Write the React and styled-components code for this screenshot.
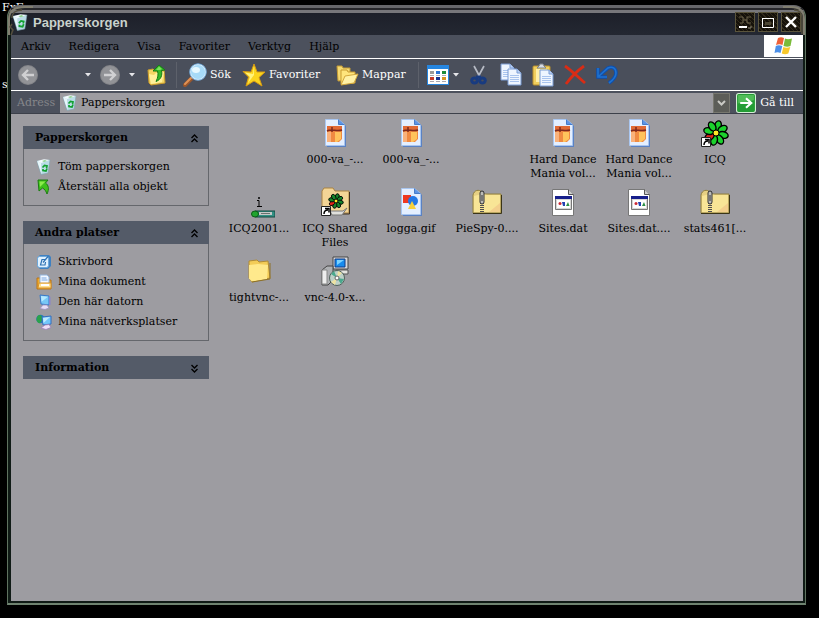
import React from "react";
import styled, {createGlobalStyle} from "styled-components";

const GlobalStyle = createGlobalStyle`
  * {
    box-sizing: border-box;
  }

  body {
    margin: 0;
    background-color: #000;
    font-family: "DejaVu Serif", serif;
    font-size: 11px;
    line-height: 14px;
    color: #000;
  }

  button, input {
    font: inherit;
    color: inherit;
    margin: 0;
    padding: 0;
    border: 0;
    background: none;
  }

  svg {
    display: block;
    flex: none;
  }
`

const Desktop = styled.div`
  position: relative;
  min-height: 100vh;
  display: flex;
  padding: 5px 13px 13px 7px;
`

const DesktopLabel = styled.span`
  position: absolute;
  left: 2px;
  top: ${({$top}) => $top}px;
  color: #fff;
`

const Window = styled.div`
  position: relative;
  flex: 1;
  min-width: 0;
  display: flex;
  flex-direction: column;
  border: 1px solid #5f7360;
  border-top: 3px solid #66666a;
  border-bottom: 2px solid #6f8370;
  border-radius: 12px 12px 0 0;
  padding: 0 2px 2px 3px;
  background-color: #101b16;
`

const Corner = styled.svg`
  position: absolute;
  top: -4px;
  ${({$right}) => ($right ? 'right: -2px;' : 'left: -1px;')}
  pointer-events: none;
`

const TitleBar = styled.header`
  display: flex;
  align-items: center;
  height: 27px;
  padding: 0 2px 0 1px;
  border-top: 1px solid #26262a;
  background: linear-gradient(#26262a 0, #26262a 1px, #77777b 1px, #77777b 4px, #1d202a 4px, #242832 100%);
`

const Title = styled.h1`
  flex: 1;
  margin: 0 0 0 4px;
  padding-top: 2px;
  font-family: "Liberation Sans", sans-serif;
  font-size: 13px;
  font-weight: bold;
  color: #c9d2cc;
`

const Controls = styled.div`
  display: flex;
  gap: 3px;
`

const ControlButton = styled.button`
  width: 20px;
  height: 20px;
  border: 1px solid #5a543c;
  background: repeating-linear-gradient(45deg, #15110a 0, #15110a 2px, #30291a 2px, #30291a 3px);
`

const MenuBar = styled.nav`
  display: flex;
  align-items: center;
  gap: 18px;
  height: 24px;
  padding-left: 10px;
  background-color: #4c515d;
  border-bottom: 1px solid #fff;
`

const Flag = styled.div`
  display: flex;
  align-items: center;
  justify-content: center;
  align-self: stretch;
  width: 39px;
  margin-left: auto;
  background-color: #fff;
  border-bottom: 1px solid #4c515d;
`

const ToolBar = styled.div`
  display: flex;
  align-items: center;
  gap: 6px;
  height: 32px;
  padding-left: 7px;
  background-color: #4a4f5b;
  border-bottom: 1px solid #fff;
`

const ToolButton = styled.button`
  display: flex;
  flex: none;
  align-items: center;
  justify-content: ${({$left}) => ($left ? 'flex-start' : 'center')};
  gap: 3px;
  width: ${({$width}) => $width || 26}px;
  height: 26px;
  color: #fff;
  white-space: nowrap;
`

const ToolGroup = styled.div`
  display: flex;
`

const Divider = styled.span`
  width: 1px;
  height: 26px;
  background-color: #5d616b;
`

const AddressBar = styled.form`
  display: flex;
  align-items: center;
  height: 23px;
  padding: 2px 9px 0 6px;
  background-color: #4c515d;
  border-bottom: 1px solid #3c404a;
`

const AddressLabel = styled.label`
  width: 43px;
  color: #85868a;
`

const AddressField = styled.div`
  display: flex;
  align-items: center;
  flex: 1;
  gap: 3px;
  height: 20px;
  padding-left: 2px;
  background-color: #9d9ca1;
`

const AddressInput = styled.input`
  flex: 1;
  min-width: 0;
  outline: none;
`

const DropButton = styled.button`
  display: flex;
  align-items: center;
  justify-content: center;
  width: 17px;
  height: 20px;
  border: 1px solid #77776f;
  background-color: #5c5d58;
`

const GoButton = styled.button`
  display: flex;
  align-items: center;
  gap: 4px;
  margin-left: 6px;
  color: #fff;
  white-space: nowrap;
`

const Content = styled.main`
  display: flex;
  flex: 1;
  background-color: #9d9ca1;
`

const Sidebar = styled.aside`
  display: flex;
  flex: none;
  flex-direction: column;
  gap: 15px;
  width: 210px;
  padding: 12px;
`

const PanelHeader = styled.button`
  display: flex;
  align-items: center;
  justify-content: space-between;
  width: 100%;
  height: 23px;
  padding: 1px 10px 0 12px;
  background-color: #545b68;
  font-weight: bold;
`

const PanelBody = styled.ul`
  list-style: none;
  margin: 0;
  padding: 8px 12px;
  border: 1px solid #65676c;
  border-top: 0;
`

const PanelLink = styled.a`
  display: flex;
  align-items: center;
  gap: 6px;
  height: 20px;
  color: #000;
  text-decoration: none;
  white-space: nowrap;
`

const Files = styled.ul`
  flex: 1;
  display: grid;
  grid-template-columns: repeat(auto-fill, 76px);
  grid-auto-rows: 63px;
  row-gap: 6px;
  align-content: start;
  list-style: none;
  margin: 0;
  padding: 4px 0 0;
`

const FileButton = styled.button`
  display: flex;
  flex-direction: column;
  align-items: center;
  gap: 3px;
  width: 100%;
  white-space: pre;
`

const BinIcon = ({size = 16}) => (
    <svg width={size} height={size} viewBox="0 0 16 16">
        <path d="M1 2l13-1-2 13-7 1.500z" fill="#b9dce6" stroke="#7fa3b0" strokeWidth=".6"/>
        <path d="M1 2l4 2 9-3-6-.8z" fill="#f4fbff"/>
        <path d="M1 2l4 2 .5 11z" fill="#e7f6fa"/>
        <path d="M6.500 8.500l2-2 2.500.5-.5 2M11 9.500l-1 2.500-3-.5V10" fill="none" stroke="#12a030" strokeWidth="1.700"/>
        <path d="M6 2l3-1 2 1-3 1z" fill="#8cd28e"/>
    </svg>
)

const RestoreIcon = () => (
    <svg width="16" height="16" viewBox="0 0 16 16">
        <path d="M2 1h10l-2.500 3c3 2 4 6 1.500 11-1-3-2.500-5-4.500-6L3 12z" fill="#3fc01b" stroke="#1c7b12"/>
        <path d="M3.500 2.500h6L4 8z" fill="#8cec4a"/>
    </svg>
)

const DesktopIcon = () => (
    <svg width="16" height="16" viewBox="0 0 16 16">
        <path d="M4 1h9l2 2v9l-3 3H4l-3-3V4z" fill="#3f80c0"/>
        <rect x="1.500" y="2.500" width="11" height="11" rx="2" fill="#dff1ff" stroke="#6ea8da"/>
        <path d="M9.500 5.500H6L4.500 11h4.500l.5-3M7 8.500l5-6" fill="none" stroke="#2e72b4" strokeWidth="1.200"/>
    </svg>
)

const DocumentsIcon = () => (
    <svg width="16" height="16" viewBox="0 0 16 16">
        <path d="M1 4h4l1 2h9v9H1z" fill="#eda92d" stroke="#b87518"/>
        <path d="M4 1h7l2 2v7H4z" fill="#f2f8ff" stroke="#92b4dc"/>
        <path d="M5.500 4h5M5.500 6h6" stroke="#7ba6de"/>
        <path d="M3 9h12v5H2z" fill="#ffe292" stroke="#d9942a"/>
        <path d="M5 11h8" stroke="#fff" strokeWidth="2"/>
    </svg>
)

const ComputerIcon = () => (
    <svg width="16" height="16" viewBox="0 0 16 16">
        <path d="M4 1l9 1v9l-8-1z" fill="#77c7f6" stroke="#3879c8"/>
        <path d="M5 2l7 .8-6.500 5z" fill="#b6e9ff"/>
        <path d="M7 11h4l2 3-4 1.500-5-1z" fill="#e6def6" stroke="#9b8fc0" strokeWidth=".8"/>
        <path d="M13 2l1.500 1v8L13 11z" fill="#8a84cc"/>
    </svg>
)

const NetworkIcon = () => (
    <svg width="16" height="16" viewBox="0 0 16 16">
        <circle cx="4.500" cy="5" r="4.300" fill="#237ab8"/>
        <path d="M1 3c2-3 4-2 5 0s-1 5-2 6-3-1-3.500-3z" fill="#2ba24b"/>
        <path d="M6 3l9-1v8l-8 1z" fill="#72c6fa" stroke="#356dbe"/>
        <path d="M7 4l7-1-6.500 6z" fill="#c0ebff"/>
        <path d="M9 11l4-.5 2 3-5 2-5-1.500z" fill="#eddff6" stroke="#9d7fb9" strokeWidth=".8"/>
    </svg>
)

const RoundArrow = ({flip}) => (
    <svg width="20" height="20" viewBox="0 0 20 20">
        <circle cx="10" cy="10" r="10" fill="#85868a"/>
        <circle cx="10" cy="10" r="9" fill="#929397"/>
        <path d={flip ? "M4 10h11M10 5l5 5-5 5" : "M16 10H5M10 5l-5 5 5 5"} fill="none" stroke="#d0d0d2" strokeWidth="2.400"/>
    </svg>
)

const SmallArrow = () => (
    <svg width="6" height="4" viewBox="0 0 6 4">
        <path d="M0 0h6L3 3.500z" fill="#e6e6ea"/>
    </svg>
)

const UpIcon = () => (
    <svg width="20" height="22" viewBox="0 0 20 22">
        <path d="M1 6l5-1 2 2 9-1 1 13-14 2-2-2z" fill="#f4d563" stroke="#c99b2c"/>
        <path d="M2 10l5 1 2-2 8-1-2 10-11 2z" fill="#fff09a"/>
        <path d="M6 7l6-6 6 5-3.500.5c1 5-.5 9-5.500 11 2-4 2.500-7 1.500-10.500z" fill="#36b828" stroke="#147c16"/>
        <path d="M9 6l3-3.500 3 2.500-2 1z" fill="#7be35c"/>
    </svg>
)

const SearchIcon = () => (
    <svg width="24" height="24" viewBox="0 0 24 24">
        <path d="M9 15l-7 7" stroke="#9a562b" strokeWidth="4" strokeLinecap="round"/>
        <path d="M8 15l-6 6" stroke="#df9256" strokeWidth="2" strokeLinecap="round"/>
        <circle cx="15" cy="9" r="7.800" fill="#a7daf7" stroke="#d9edfa" strokeWidth="1.500"/>
        <circle cx="15" cy="9" r="8.300" fill="none" stroke="#4c8fcc" strokeWidth=".7"/>
        <ellipse cx="13" cy="7" rx="4" ry="3" fill="#e6f8ff"/>
    </svg>
)

const StarIcon = () => (
    <svg width="24" height="24" viewBox="0 0 24 24">
        <path d="M12 1l3 8h8l-6 5.500L20 23l-8-5-8 5 2.500-9L1 8.500 9 9z" fill="#fbd51e" stroke="#d79b13"/>
        <path d="M12 3l-1 8-8-1.500 5 4.500L6 20l6-8z" fill="#fff47c"/>
    </svg>
)

const FoldersIcon = () => (
    <svg width="23" height="22" viewBox="0 0 23 22">
        <path d="M1 2h5l1 2h7v12l-12 1z" fill="#f6da72" stroke="#c49b34"/>
        <path d="M5 6h6l1 2h7v11L5 20z" fill="#ffe57c" stroke="#c99c31"/>
        <path d="M9 12l13-2-4 9-13 2z" fill="#fff1a6" stroke="#d4a83c"/>
    </svg>
)

const ViewsIcon = () => (
    <svg width="22" height="20" viewBox="0 0 22 20">
        <rect width="22" height="20" fill="#2686e0"/>
        <rect x="1" y="4" width="20" height="15" fill="#fff"/>
        {['#9a9a9a', '#2d75d6', '#1d8c3a', '#c43a2a', '#17318f', '#d59422'].map((color, i) => (
            <g key={color}>
                <rect x={3 + (i % 3) * 6} y={i < 3 ? 6 : 12} width="4" height="3" fill={color}/>
                <path d={`M${3 + (i % 3) * 6} ${i < 3 ? 10.5 : 16.5}h4`} stroke="#a9a9b2"/>
            </g>
        ))}
    </svg>
)

const CutIcon = () => (
    <svg width="20" height="20" viewBox="0 0 20 20">
        <path d="M5 1l6 11M15 1L9 12" stroke="#b6bac4" strokeWidth="1.700"/>
        <ellipse cx="5.500" cy="15.500" rx="2.800" ry="2.500" fill="none" stroke="#183b80" strokeWidth="3"/>
        <ellipse cx="13.500" cy="15.500" rx="2.800" ry="2.500" fill="none" stroke="#183b80" strokeWidth="3"/>
        <path d="M7 12h5" stroke="#183b80" strokeWidth="3"/>
    </svg>
)

const Sheet = ({x, y}) => (
    <g transform={`translate(${x} ${y})`}>
        <path d="M0 0h9l4 4v12H0z" fill="#eef5ff" stroke="#789bd4"/>
        <path d="M9 0v4h4" fill="#bdd3f5" stroke="#789bd4"/>
        <path d="M2 6.500h9M2 8.500h9M2 10.500h9M2 12.500h9" stroke="#a9c4ee"/>
    </g>
)

const CopyIcon = () => (
    <svg width="22" height="23" viewBox="0 0 22 23">
        <Sheet x={1} y={1}/>
        <Sheet x={8} y={6}/>
    </svg>
)

const PasteIcon = () => (
    <svg width="22" height="24" viewBox="0 0 22 24">
        <rect x="1" y="3" width="17" height="19" rx="1" fill="#f1cf5d" stroke="#ba912f"/>
        <path d="M4 6h11v13H4z" fill="#fff0a8"/>
        <path d="M5 5l2-2 1-2h3l1 2 2 2z" fill="#d6dbe3" stroke="#7d828c"/>
        <Sheet x={8} y={7}/>
    </svg>
)

const DeleteIcon = () => (
    <svg width="22" height="20" viewBox="0 0 22 20">
        <path d="M1 1c6 4 13 11 20 17M20 1C13 6 7 12 2 19" fill="none" stroke="#d92c15" strokeWidth="2.800"/>
    </svg>
)

const UndoIcon = () => (
    <svg width="22" height="20" viewBox="0 0 22 20">
        <path d="M2 3v9h9M3 11l9-8c4-2 8 0 8 5 0 4-3 7-7 10" fill="none" stroke="#0e4fae" strokeWidth="3.600"/>
        <path d="M2 3v9h9M3 11l9-8c4-2 8 0 8 5 0 4-3 7-7 10" fill="none" stroke="#1f72cf" strokeWidth="1.600"/>
    </svg>
)

const FlagIcon = () => (
    <svg width="20" height="18" viewBox="0 0 20 18">
        <path d="M4 1c2-1 4-1 6 0L8.500 8c-2-1-4-1-6.500 0z" fill="#ee6138"/>
        <path d="M11 1.500c2 1 4 1 7 0L16.500 9c-2 1-4.500 1-7 0z" fill="#7abb39"/>
        <path d="M1.800 9c2-1 4-1 6.500 0L6.500 16c-2-1-4-1-6 0z" fill="#4b8fe8"/>
        <path d="M9.300 10c2 1 4.500 1 7 0l-2 6.500c-2 1-4.500 1-6.500 0z" fill="#f8c82b"/>
    </svg>
)

const GoIcon = () => (
    <svg width="20" height="20" viewBox="0 0 19 19">
        <rect x=".5" y=".5" width="18" height="18" rx="2" fill="#249c35" stroke="#d5efd7"/>
        <path d="M2 2h15v5L2 10z" fill="#51bd59"/>
        <path d="M4 9.500h10M9.500 5l5 4.500-5 4.500" fill="none" stroke="#fff" strokeWidth="2"/>
    </svg>
)

const Chevrons = ({down}) => (
    <svg width="9" height="9" viewBox="0 0 9 9">
        <path d={down ? "M1.500 1l3 3 3-3M1.500 5l3 3 3-3" : "M1.500 4l3-3 3 3M1.500 8l3-3 3 3"} fill="none" stroke="#000" strokeWidth="1.400"/>
    </svg>
)

const petals = [0, 45, 90, 135, 180, 225, 270, 315]

const Flower = ({x, y, scale = 1, dark}) => (
    <g transform={`translate(${x} ${y}) scale(${scale})`}>
        <circle r="7" fill="#000"/>
        {petals.map((angle) => (
            <ellipse
                key={angle}
                cy="-7.500"
                rx="3.300"
                ry="5"
                transform={`rotate(${angle + 15})`}
                fill={angle === 225 ? '#e02218' : dark ? '#14862b' : '#1bd12d'}
                stroke="#000"
                strokeWidth="1.400"
            />
        ))}
        <circle r="3" fill="#ffe826" stroke="#000"/>
    </g>
)

const Shortcut = () => (
    <g>
        <path d="M2.500 19.500h9v9h-9z" fill="#fff" stroke="#222"/>
        <path d="M5 27c0-3 1-4 4-4M6 21.500h4v4" fill="none" stroke="#000" strokeWidth="1.500"/>
    </g>
)

const Zipper = () => (
    <g>
        <path d="M2 8c1-5 6-6 9-3l2 2h17v19H2z" fill="#e6d083" stroke="#91803e"/>
        <path d="M3 9l8-2 5 1h13v17H3z" fill="#f8e596"/>
        <path d="M18 25l11-9v9z" fill="#f3cf8c"/>
        <path d="M30.500 8v18.500H2" fill="none" stroke="#3b3518"/>
        <path d="M11 4v22" stroke="#505050" strokeWidth="4" strokeDasharray="1 1"/>
        <rect x="9" y="4" width="4" height="13" rx="2" fill="#bcbcb8" stroke="#333"/>
        <path d="M11 8v6" stroke="#333"/>
    </g>
)

const PagePaper = () => (
    <g>
        <path d="M8 3h14l5 5v21H8z" fill="#5a82c4"/>
        <path d="M6.500 1.500h13l6 5v21h-19z" fill="#e4efff" stroke="#a9c6f0"/>
        <path d="M19.500 1.500v5h6" fill="#5c94e5" stroke="#477cc9"/>
    </g>
)

const fileIcons = {
    archive: (
        <>
            <PagePaper/>
            <path d="M8 8h15v13l-3 3H8z" fill="#f08a42"/>
            <path d="M8 8h15v5H8z" fill="#e06a35"/>
            <path d="M16 14h6v7l-4 3h-2z" fill="#ffc35c"/>
            <path d="M8 14h4v10H8z" fill="#f9b27c"/>
            <path d="M8 13c5-3 9 1 15-1M13 9v5" fill="none" stroke="#7d281c" strokeWidth="1.500"/>
        </>
    ),
    image: (
        <>
            <PagePaper/>
            <path d="M8 8h8v8H8z" fill="#ee3821"/>
            <circle cx="18" cy="14" r="5" fill="#2478e6"/>
            <path d="M17 14l4 8h-8z" fill="#f7d13a"/>
        </>
    ),
    icq: (
        <>
            <Flower x={17} y={15}/>
            <Shortcut/>
        </>
    ),
    icqInstall: (
        <>
            <path d="M12 24h20v6H12z" fill="#329084" stroke="#124940"/>
            <path d="M16 25h13v3H16z" fill="#c6c8c8"/>
            <path d="M18 26.500h9" stroke="#69726f"/>
            <ellipse cx="12" cy="27" rx="3.500" ry="3" fill="#1fa52e" stroke="#0b5d16"/>
            <path d="M14 13.500h2V19M14 19.500h5" fill="none" stroke="#000"/>
            <path d="M15 11h2" stroke="#000" strokeWidth="1.500"/>
        </>
    ),
    icqFolder: (
        <>
            <path d="M3 4l2-3h9l2 3h14v22H3z" fill="#f3d596" stroke="#a98343"/>
            <path d="M30.500 5v22H4" fill="none" stroke="#40301c"/>
            <path d="M11 24h13l4-3-5 7H13z" fill="#dfdfdc" stroke="#777"/>
            <Flower x={17} y={14} scale={0.6} dark/>
            <Shortcut/>
        </>
    ),
    zip: <Zipper/>,
    dat: (
        <>
            <path d="M5.500 2.500h16l5 5v21h-21z" fill="#fff" stroke="#777"/>
            <path d="M21.500 2.500v5h5" fill="#ccc" stroke="#555"/>
            <path d="M8.500 10.500h16v12h-16z" fill="#d6d6d4" stroke="#777"/>
            <path d="M8 9h17v3H8z" fill="#171f8b"/>
            <path d="M10 13h13v8H10z" fill="#fff"/>
            <circle cx="13" cy="16.500" r="1.500" fill="#ce2a35"/>
            <path d="M15 15h3v4h-2z" fill="#2441b2"/>
            <path d="M21 15l1.500 4H19z" fill="#2b8f45"/>
        </>
    ),
    folder: (
        <>
            <path d="M6 5l8-1 2 2 9-1 2 17-18 4-3-4z" fill="#f3cc57" stroke="#b18c35"/>
            <path d="M6 9l9-1 10 1-1 14-15 2.500-3-3z" fill="#ffe98c"/>
            <path d="M9 26l18-3V7" fill="none" stroke="#8d7129"/>
        </>
    ),
    setup: (
        <>
            <path d="M14 1h15v12H14z" fill="#d9dadd" stroke="#444"/>
            <path d="M16 3h10v8H16z" fill="#188cee" stroke="#123c88"/>
            <path d="M18 4h7l-7 5z" fill="#7bd2ff"/>
            <path d="M17 14h12v4H17z" fill="#e4e4e0" stroke="#555"/>
            <path d="M3 14l5-4h6v14l-5 5H3z" fill="#aeb0b3" stroke="#444"/>
            <path d="M3 14h5v14H3z" fill="#eee" stroke="#888"/>
            <circle cx="18" cy="22" r="7.500" fill="#bdd0c8" stroke="#50625b"/>
            <path d="M18 22l-6-4 3-3zM18 22l7 1-3 5z" fill="#4aa88d"/>
            <path d="M18 22l1-7 4 2zM18 22l-2 7-4-3z" fill="#eee2a2"/>
            <circle cx="18" cy="22" r="2" fill="#fff" stroke="#666"/>
        </>
    ),
}

const files = [
    null,
    {icon: 'archive', name: '000-va_-...'},
    {icon: 'archive', name: '000-va_-...'},
    null,
    {icon: 'archive', name: 'Hard Dance\nMania vol...'},
    {icon: 'archive', name: 'Hard Dance\nMania vol...'},
    {icon: 'icq', name: 'ICQ'},
    {icon: 'icqInstall', name: 'ICQ2001...'},
    {icon: 'icqFolder', name: 'ICQ Shared\nFiles'},
    {icon: 'image', name: 'logga.gif'},
    {icon: 'zip', name: 'PieSpy-0....'},
    {icon: 'dat', name: 'Sites.dat'},
    {icon: 'dat', name: 'Sites.dat....'},
    {icon: 'zip', name: 'stats461[...'},
    {icon: 'folder', name: 'tightvnc-...'},
    {icon: 'setup', name: 'vnc-4.0-x...'},
]

const panels = [
    {
        title: 'Papperskorgen',
        links: [
            {icon: <BinIcon/>, text: 'Töm papperskorgen'},
            {icon: <RestoreIcon/>, text: 'Återställ alla objekt'},
        ],
    },
    {
        title: 'Andra platser',
        links: [
            {icon: <DesktopIcon/>, text: 'Skrivbord'},
            {icon: <DocumentsIcon/>, text: 'Mina dokument'},
            {icon: <ComputerIcon/>, text: 'Den här datorn'},
            {icon: <NetworkIcon/>, text: 'Mina nätverksplatser'},
        ],
    },
    {title: 'Information'},
]

const menus = ['Arkiv', 'Redigera', 'Visa', 'Favoriter', 'Verktyg', 'Hjälp']

const Panel = ({title, links}) => {
    return (
        <section>
            <PanelHeader aria-expanded={!!links}>
                {title}
                <Chevrons down={!links}/>
            </PanelHeader>
            {links && (
                <PanelBody>
                    {links.map(({icon, text}) => (
                        <li key={text}>
                            <PanelLink href="#">{icon}{text}</PanelLink>
                        </li>
                    ))}
                </PanelBody>
            )}
        </section>
    )
}

const App = () => {
    return (
        <>
            <GlobalStyle/>
            <Desktop>
                <DesktopLabel $top={1}>FxF</DesktopLabel>
                <DesktopLabel $top={78}>s</DesktopLabel>
                <Window>
                    <TitleBar>
                        <BinIcon size={17}/>
                        <Title>Papperskorgen</Title>
                        <Controls>
                            <ControlButton aria-label="Minimera">
                                <svg width="18" height="18" viewBox="0 0 18 18">
                                    <path d="M3 4h4v3h4V4h4M4 10h3V7M11 7v3h4" fill="none" stroke="#6b634a"/>
                                    <path d="M3 14h8" stroke="#fff" strokeWidth="2"/>
                                    <path d="M12 15h3v-2" fill="none" stroke="#8e8976"/>
                                </svg>
                            </ControlButton>
                            <ControlButton aria-label="Maximera">
                                <svg width="18" height="18" viewBox="0 0 18 18">
                                    <path d="M3.500 5.500h11v9h-11z" fill="none" stroke="#fff"/>
                                    <path d="M3 5.500h12" stroke="#fff"/>
                                    <path d="M6 9h6v3H6z" fill="#4c4633"/>
                                </svg>
                            </ControlButton>
                            <ControlButton aria-label="Stäng">
                                <svg width="18" height="18" viewBox="0 0 18 18">
                                    <path d="M4 4l10 10M14 4L4 14" stroke="#fff" strokeWidth="2.400"/>
                                </svg>
                            </ControlButton>
                        </Controls>
                    </TitleBar>
                    <MenuBar>
                        {menus.map((menu) => <button key={menu}>{menu}</button>)}
                        <Flag><FlagIcon/></Flag>
                    </MenuBar>
                    <ToolBar>
                        <ToolButton $width={58} $left aria-label="Bakåt"><RoundArrow/></ToolButton>
                        <ToolButton $width={12} aria-label="Bakåt, lista"><SmallArrow/></ToolButton>
                        <ToolButton $width={20} aria-label="Framåt"><RoundArrow flip/></ToolButton>
                        <ToolButton $width={12} aria-label="Framåt, lista"><SmallArrow/></ToolButton>
                        <ToolButton aria-label="Upp"><UpIcon/></ToolButton>
                        <Divider/>
                        <ToolButton $width={53} $left><SearchIcon/>Sök</ToolButton>
                        <ToolButton $width={88} $left><StarIcon/>Favoriter</ToolButton>
                        <ToolButton $width={76} $left><FoldersIcon/>Mappar</ToolButton>
                        <Divider/>
                        <ToolGroup>
                            <ToolButton aria-label="Visa"><ViewsIcon/></ToolButton>
                            <ToolButton $width={9} aria-label="Visa, lista"><SmallArrow/></ToolButton>
                        </ToolGroup>
                        <ToolButton aria-label="Klipp ut"><CutIcon/></ToolButton>
                        <ToolButton aria-label="Kopiera"><CopyIcon/></ToolButton>
                        <ToolButton aria-label="Klistra in"><PasteIcon/></ToolButton>
                        <ToolButton aria-label="Ta bort"><DeleteIcon/></ToolButton>
                        <ToolButton aria-label="Ångra"><UndoIcon/></ToolButton>
                    </ToolBar>
                    <AddressBar onSubmit={(e) => e.preventDefault()}>
                        <AddressLabel htmlFor="address">Adress</AddressLabel>
                        <AddressField>
                            <BinIcon/>
                            <AddressInput id="address" defaultValue="Papperskorgen"/>
                            <DropButton type="button" aria-label="Visa adresser">
                                <svg width="9" height="6" viewBox="0 0 9 6">
                                    <path d="M1 1l3.500 3.500L8 1" fill="none" stroke="#c9c9c4" strokeWidth="2"/>
                                </svg>
                            </DropButton>
                        </AddressField>
                        <GoButton><GoIcon/>Gå till</GoButton>
                    </AddressBar>
                    <Content>
                        <Sidebar>
                            {panels.map((panel) => <Panel key={panel.title} {...panel}/>)}
                        </Sidebar>
                        <Files>
                            {files.map((file, i) => (
                                <li key={i}>
                                    {file && (
                                        <FileButton>
                                            <svg width="32" height="32" viewBox="0 0 32 32">{fileIcons[file.icon]}</svg>
                                            {file.name}
                                        </FileButton>
                                    )}
                                </li>
                            ))}
                        </Files>
                    </Content>
                    <Corner width="28" height="32" viewBox="0 0 28 32">
                        <path d="M2 31V15C2 6 8 3 18 3h8" fill="none" stroke="#817e70" strokeWidth="2"/>
                        <path d="M4 31l2-5-3-3 2-3M5 14c0-5 4-8 10-8" fill="none" stroke="#55503e" strokeWidth="1.500"/>
                    </Corner>
                    <Corner $right width="28" height="32" viewBox="0 0 28 32">
                        <path d="M25 31V15c0-9-5-12-13-12H4" fill="none" stroke="#817e70" strokeWidth="2"/>
                        <path d="M23 30V14c0-5-3-8-8-8" fill="none" stroke="#55503e" strokeWidth="1.500"/>
                    </Corner>
                </Window>
            </Desktop>
        </>
    )
}

export default App
